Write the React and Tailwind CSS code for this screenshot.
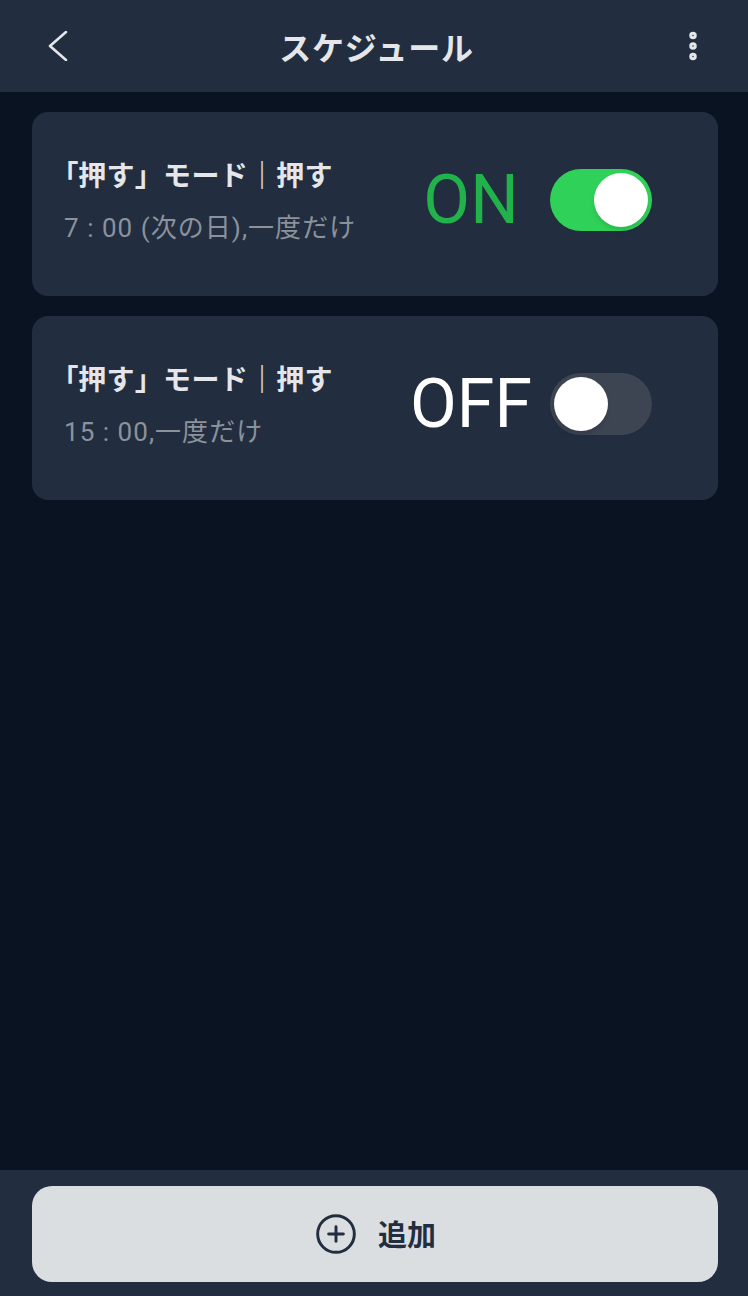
import { EllipsisVertical, CirclePlus } from "lucide-react";

const jp = "font-['Noto_Sans_CJK_JP','Noto_Sans',sans-serif]";

const schedules = [
  { id: 1, time: "7 : 00 (次の日),一度だけ", on: true },
  { id: 2, time: "15 : 00,一度だけ", on: false },
];

function Toggle({ on }) {
  return (
    <div
      className={`w-[102px] h-[62px] rounded-full p-1 flex ${
        on ? "bg-[#30d158] justify-end" : "bg-[#3d4452] justify-start"
      }`}
    >
      <div className="w-[54px] h-[54px] rounded-full bg-white shadow-md"></div>
    </div>
  );
}

function ScheduleCard({ item }) {
  return (
    <div className="h-[184px] bg-[#222d3f] rounded-2xl flex items-center justify-between pl-8 pr-[66px] pb-2">
      {/*Text*/}
      <div className="flex flex-col gap-[22px]">
        <h2 className="text-[28px] leading-[34px] font-bold text-[#e4e6e9] tracking-[0.01em]">
          <span className="[font-feature-settings:'palt']">「</span>押す」モード｜押す
        </h2>
        <p className="text-[26px] leading-[30px] text-[#8b929c] font-['Roboto','Noto_Sans_CJK_JP',sans-serif] tracking-[0.04em]">
          {item.time}
        </p>
      </div>
      {/*Switch*/}
      <div className="flex items-center">
        <span
          className={`w-[142px] mr-[8px] text-center text-[68px] leading-none font-['Roboto',sans-serif] ${
            item.on ? "text-[#22b24c]" : "text-white"
          }`}
        >
          {item.on ? "ON" : "OFF"}
        </span>
        <Toggle on={item.on} />
      </div>
    </div>
  );
}

export default function App() {
  return (
    <div className={`w-[748px] h-[1296px] bg-[#0a1322] flex flex-col ${jp}`}>
      {/*Header*/}
      <div className="h-[92px] bg-[#222d3f] flex items-center justify-between pl-[48px] pr-[40px] shrink-0">
        <svg width="20" height="30" viewBox="0 0 20 30" fill="none" className="text-[#e4e6e9]">
          <polyline points="18,1 2,15 18,29" stroke="currentColor" strokeWidth="2.6" strokeLinecap="round" strokeLinejoin="round" />
        </svg>
        <h1 className="text-[32px] font-bold text-[#e4e6e9] tracking-wide ml-[10px]">スケジュール</h1>
        <EllipsisVertical className="w-9 h-9 text-[#e4e6e9] -mr-[3px]" strokeWidth={3} />
      </div>
      {/*List*/}
      <div className="flex-1 flex flex-col gap-5 pl-8 pr-[30px] pt-5">
        {schedules.map((item) => (
          <ScheduleCard key={item.id} item={item} />
        ))}
      </div>
      {/*Bottom*/}
      <div className="h-[126px] bg-[#222d3f] pl-8 pr-[30px] pt-4 shrink-0">
        <button className="w-full h-[96px] bg-[#dbdee1] rounded-[20px] flex items-center justify-center gap-[20px]">
          <CirclePlus className="w-[44px] h-[44px] text-[#222d3f]" strokeWidth={1.6} />
          <span className="text-[29px] font-bold text-[#222d3f]">追加</span>
        </button>
      </div>
    </div>
  );
}
